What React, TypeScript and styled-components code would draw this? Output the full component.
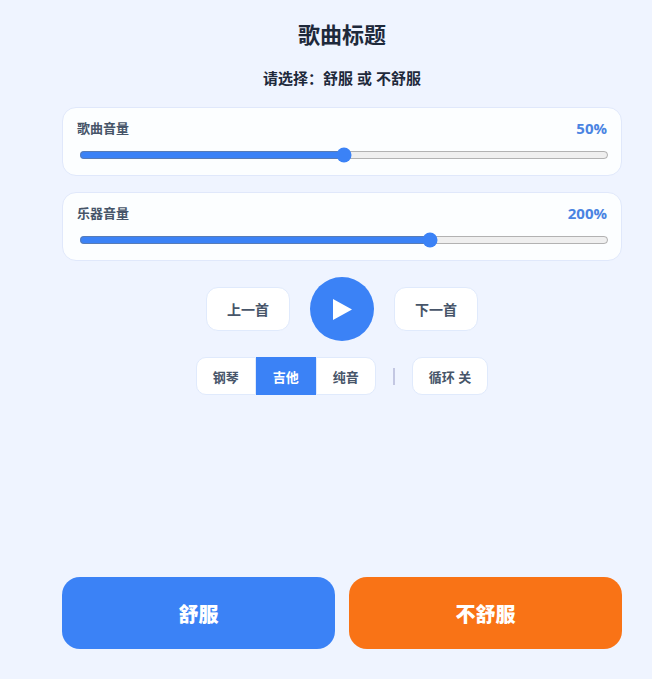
import React, { useState } from "react";
import styled, { createGlobalStyle } from "styled-components";

const GlobalStyle = createGlobalStyle`
  * { box-sizing: border-box; }
  body {
    margin: 0;
    background: #eff4ff;
    color: #1e293b;
    font-family: "Open Sans", "Noto Sans CJK SC", sans-serif;
  }
  button { font-family: inherit; cursor: pointer; }
`;

const Page = styled.main`
  display: flex;
  flex-direction: column;
  gap: 16px;
  min-height: 100vh;
  max-width: 652px;
  margin: 0 auto;
  padding: 17px 30px 30px 62px;
`;

const Header = styled.header`
  display: flex;
  flex-direction: column;
  gap: 14px;
  text-align: center;
`;

const Title = styled.h1`
  margin: 0;
  font-size: 22px;
  line-height: 34px;
  font-weight: 700;
`;

const Prompt = styled.p`
  margin: 0;
  font-size: 15px;
  line-height: 26px;
  font-weight: 600;
`;

const VolumeCard = styled.section`
  padding: 10px 14px;
  background: #fcfeff;
  border: 1px solid #e0e8fb;
  border-radius: 14px;
`;

const VolumeHead = styled.div`
  display: flex;
  justify-content: space-between;
  align-items: center;
  margin-bottom: 8px;
  line-height: 21px;
`;

const VolumeLabel = styled.label`
  font-size: 13px;
  font-weight: 600;
  color: #475569;
`;

const VolumeValue = styled.output`
  font-size: 15px;
  font-weight: 700;
  color: #4a84e2;
`;

const Range = styled.input`
  display: block;
  width: 100%;
  height: 16px;
  margin: 2px;
  accent-color: #3b82f6;
`;

const Transport = styled.div`
  display: flex;
  justify-content: center;
  align-items: center;
  gap: 20px;
`;

const SkipButton = styled.button`
  height: 44px;
  padding: 0 20px;
  background: #fff;
  border: 1px solid #e0eafc;
  border-radius: 12px;
  color: #475569;
  font-size: 14px;
  font-weight: 600;
`;

const PlayButton = styled.button`
  display: flex;
  justify-content: center;
  align-items: center;
  width: 64px;
  height: 64px;
  padding: 0;
  background: #3b82f6;
  border: 0;
  border-radius: 50%;
  color: #fff;
`;

const Options = styled.div`
  display: flex;
  justify-content: center;
  align-items: center;
  gap: 17px;
`;

const Segments = styled.div`
  display: flex;
`;

const OptionButton = styled.button<{ $active?: boolean }>`
  height: 38px;
  padding: 0 16px;
  background: ${(p) => (p.$active ? "#3b82f6" : "#fff")};
  border: 1px solid ${(p) => (p.$active ? "#3b82f6" : "#e0eafc")};
  border-radius: 10px;
  color: ${(p) => (p.$active ? "#fff" : "#475569")};
  font-size: 13px;
  font-weight: 600;

  ${Segments} > & {
    border-radius: 0;
  }
  ${Segments} > &:first-child {
    border-radius: 10px 0 0 10px;
  }
  ${Segments} > &:last-child {
    border-radius: 0 10px 10px 0;
  }
`;

const Divider = styled.span`
  width: 2px;
  height: 17px;
  background: #c3c7e2;
`;

const Answers = styled.footer`
  display: grid;
  grid-template-columns: 1fr 1fr;
  gap: 14px;
  margin-top: auto;
`;

const AnswerButton = styled.button<{ $color: string }>`
  height: 72px;
  border: 0;
  border-radius: 18px;
  background: ${(p) => p.$color};
  color: #fff;
  font-size: 20px;
  font-weight: 800;
`;

type VolumeProps = { id: string; label: string; initial: number; max: number };

function Volume({ id, label, initial, max }: VolumeProps) {
  const [value, setValue] = useState(initial);
  return (
    <VolumeCard>
      <VolumeHead>
        <VolumeLabel htmlFor={id}>{label}</VolumeLabel>
        <VolumeValue htmlFor={id}>{value}%</VolumeValue>
      </VolumeHead>
      <Range
        id={id}
        type="range"
        min={0}
        max={max}
        value={value}
        onChange={(e) => setValue(Number(e.target.value))}
      />
    </VolumeCard>
  );
}

const TONES = ["钢琴", "吉他", "纯音"];

export default function App() {
  const [tone, setTone] = useState("吉他");
  const [loop, setLoop] = useState(false);
  return (
    <>
      <GlobalStyle />
      <Page>
        <Header>
          <Title>歌曲标题</Title>
          <Prompt>请选择：舒服 或 不舒服</Prompt>
        </Header>
        <Volume id="song-volume" label="歌曲音量" initial={50} max={100} />
        <Volume id="instrument-volume" label="乐器音量" initial={200} max={300} />
        <Transport>
          <SkipButton type="button">上一首</SkipButton>
          <PlayButton type="button" aria-label="播放">
            <svg width="28" height="28" viewBox="0 0 28 28" fill="currentColor" aria-hidden="true">
              <path d="M5 4v21l19-10.5z" />
            </svg>
          </PlayButton>
          <SkipButton type="button">下一首</SkipButton>
        </Transport>
        <Options>
          <Segments>
            {TONES.map((name) => (
              <OptionButton
                key={name}
                type="button"
                $active={name === tone}
                aria-pressed={name === tone}
                onClick={() => setTone(name)}
              >
                {name}
              </OptionButton>
            ))}
          </Segments>
          <Divider />
          <OptionButton type="button" aria-pressed={loop} onClick={() => setLoop(!loop)}>
            循环 {loop ? "开" : "关"}
          </OptionButton>
        </Options>
        <Answers>
          <AnswerButton type="button" $color="#3b82f6">舒服</AnswerButton>
          <AnswerButton type="button" $color="#f97316">不舒服</AnswerButton>
        </Answers>
      </Page>
    </>
  );
}
